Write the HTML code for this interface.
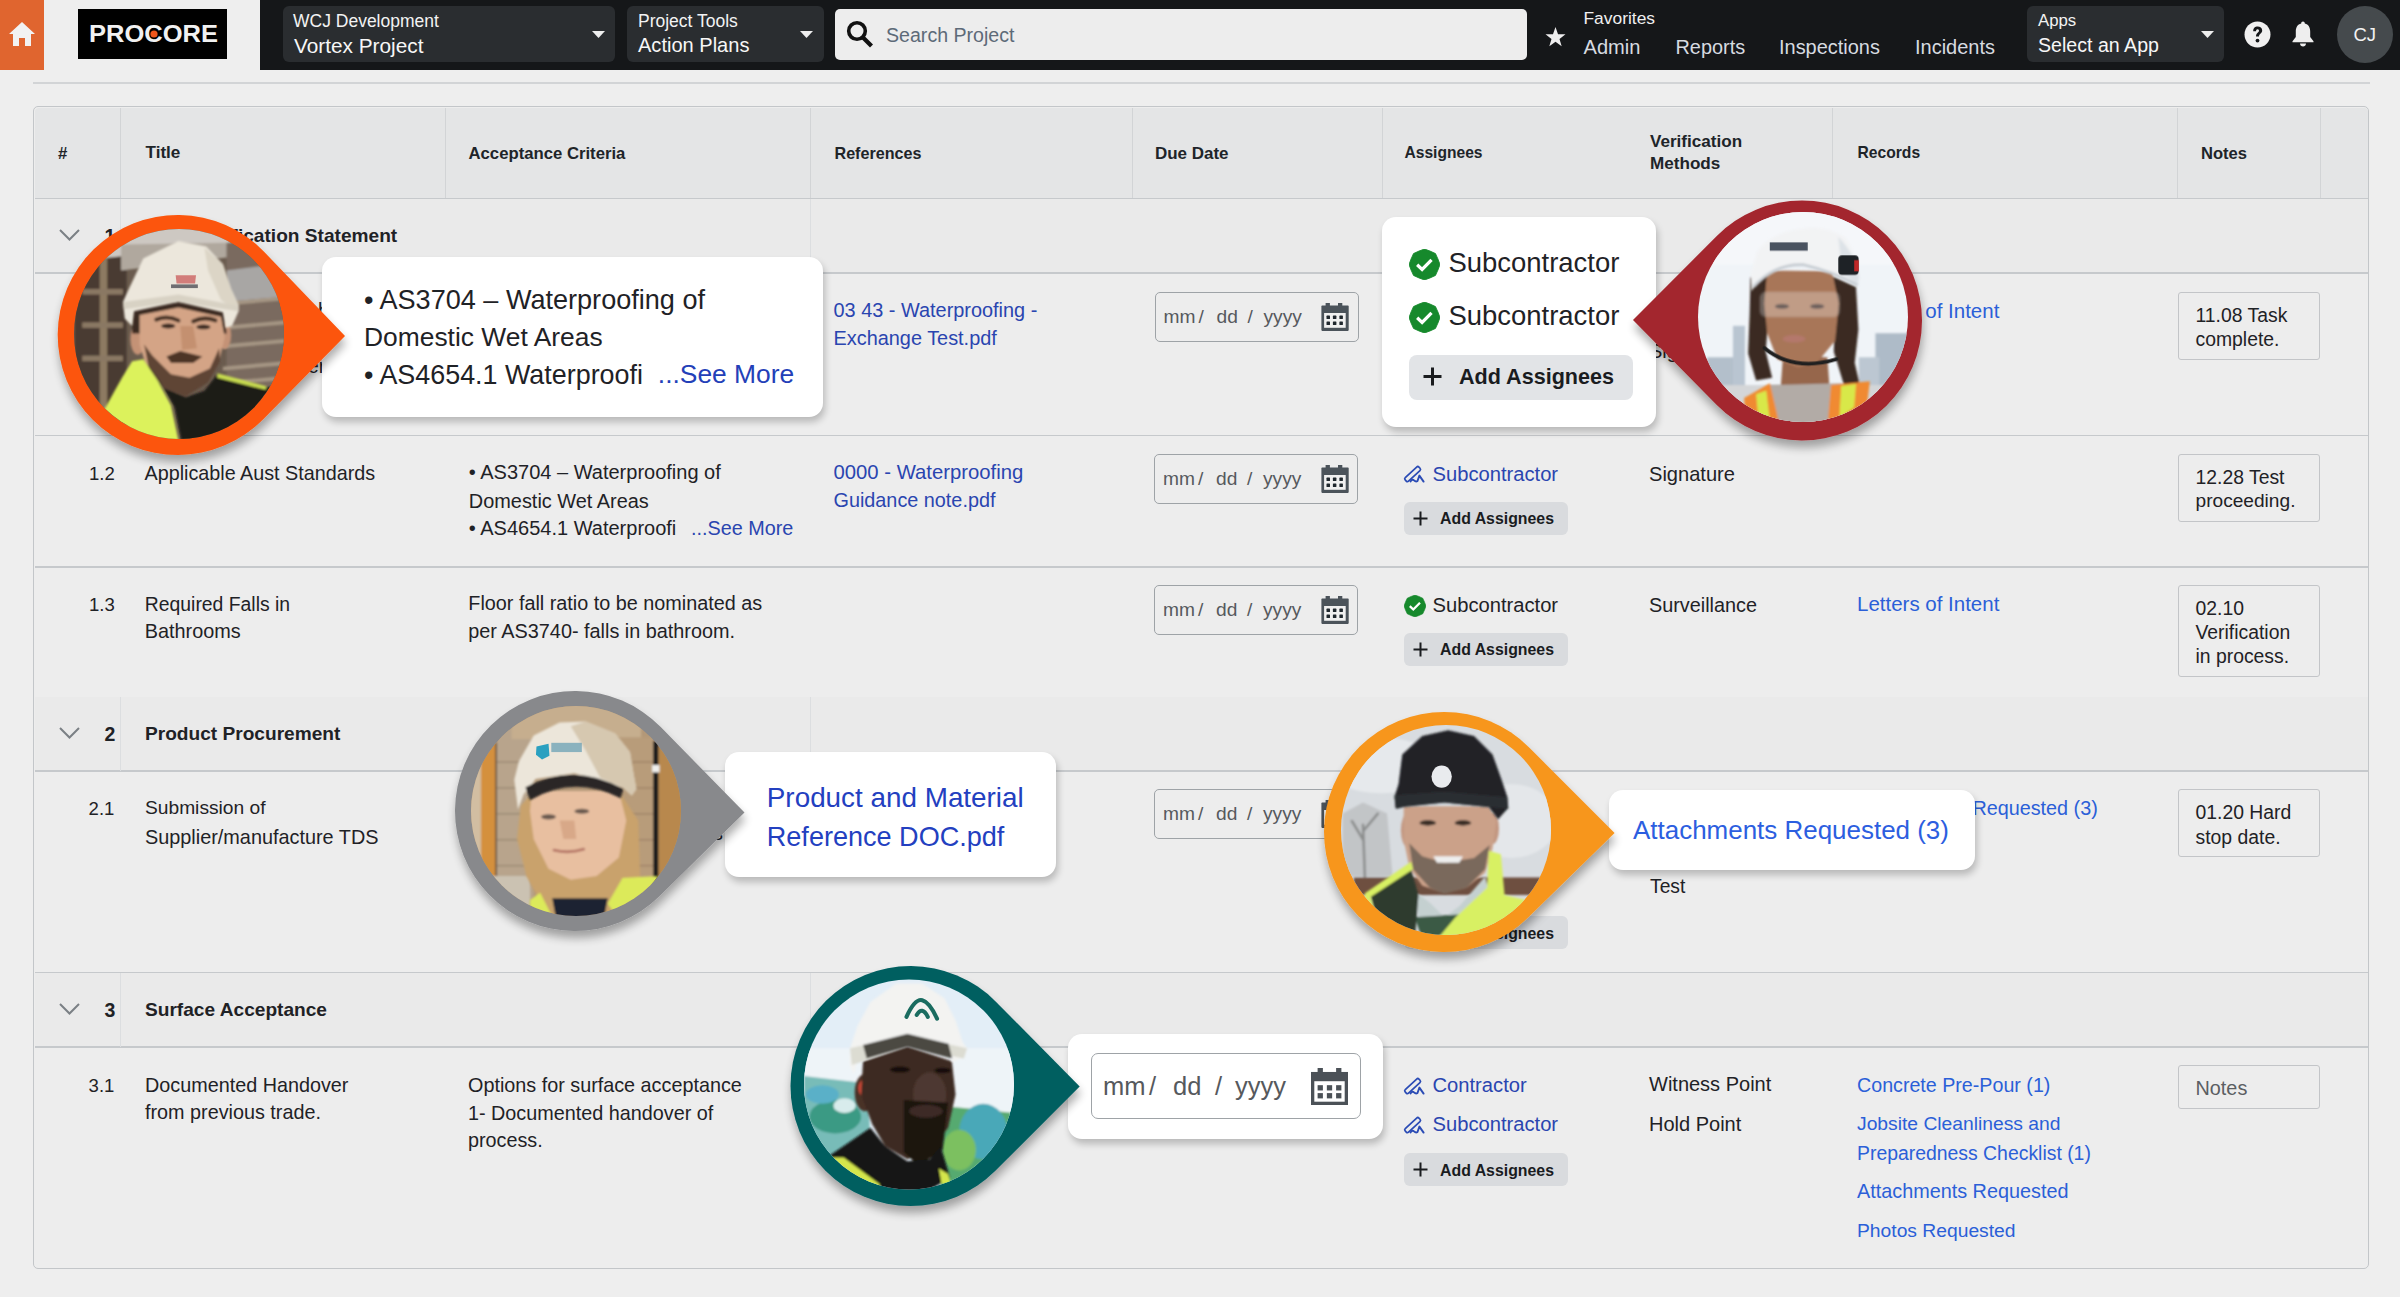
<!DOCTYPE html>
<html><head><meta charset="utf-8"><style>
html,body{margin:0;padding:0;}
body{width:2400px;height:1297px;position:relative;overflow:hidden;background:#eeeeee;font-family:"Liberation Sans",sans-serif;}
.t{position:absolute;white-space:nowrap;}
</style></head><body>
<div style="position:absolute;left:0px;top:0px;width:2400px;height:70px;background:#eeeeee"></div>
<div style="position:absolute;left:0px;top:0px;width:44px;height:70px;background:#e0652f"></div>
<svg style="position:absolute;left:8px;top:21px" width="28" height="26" viewBox="0 0 28 26"><path d="M14 1 L1 13 L5 13 L5 25 L11 25 L11 17 L17 17 L17 25 L23 25 L23 13 L27 13 Z" fill="#f2f2f2"/></svg>
<div style="position:absolute;left:78px;top:9px;width:149px;height:50px;background:#000"></div>
<svg style="position:absolute;left:78px;top:9px" width="149" height="50"><text x="11" y="33" font-family="Liberation Sans" font-weight="700" font-size="23.3" fill="#f1f1f1" textLength="129" lengthAdjust="spacingAndGlyphs">PROCORE</text><circle cx="76" cy="25" r="3.6" fill="#f0561c"/></svg>
<div style="position:absolute;left:260px;top:0px;width:2140px;height:70px;background:#151719"></div>
<div style="position:absolute;left:283px;top:6px;width:332px;height:56px;background:#2a2d30;border-radius:6px"></div>
<div class="t" style="left:293px;top:9.63px;font-size:17.5px;line-height:22px;color:#f3f3f3;">WCJ Development</div>
<div class="t" style="left:294px;top:32.59px;font-size:20.8px;line-height:26px;color:#f7f7f7;">Vortex Project</div>
<svg style="position:absolute;left:592px;top:31px" width="13" height="7"><path d="M0 0 L13 0 L6.5 7Z" fill="#eee"/></svg>
<div style="position:absolute;left:627px;top:6px;width:197px;height:56px;background:#2a2d30;border-radius:6px"></div>
<div class="t" style="left:638px;top:9.63px;font-size:17.5px;line-height:22px;color:#f3f3f3;">Project Tools</div>
<div class="t" style="left:638px;top:33.35px;font-size:20.06px;line-height:25px;color:#f7f7f7;">Action Plans</div>
<svg style="position:absolute;left:800px;top:31px" width="13" height="7"><path d="M0 0 L13 0 L6.5 7Z" fill="#eee"/></svg>
<div style="position:absolute;left:835px;top:9px;width:692px;height:51px;background:#ededed;border-radius:5px"></div>
<svg style="position:absolute;left:846px;top:20px" width="28" height="29" viewBox="0 0 28 29"><circle cx="11" cy="11" r="8.3" stroke="#111" stroke-width="3.6" fill="none"/><path d="M17 17.5 L25.5 26" stroke="#111" stroke-width="4.2" stroke-linecap="butt"/></svg>
<div class="t" style="left:886px;top:23.20px;font-size:19.6px;line-height:24px;color:#5d6a78;">Search Project</div>
<svg style="position:absolute;left:1545px;top:27px" width="21" height="20" viewBox="0 0 24 23"><path d="M12 0 L14.9 8.2 L23.5 8.4 L16.6 13.7 L19.1 22 L12 17 L4.9 22 L7.4 13.7 L0.5 8.4 L9.1 8.2Z" fill="#eee"/></svg>
<div class="t" style="left:1583.5px;top:7.17px;font-size:17.4px;line-height:22px;color:#f0f0f0;">Favorites</div>
<div class="t" style="left:1583.5px;top:35.13px;font-size:20.1px;line-height:25px;color:#d7dbe0;">Admin</div>
<div class="t" style="left:1675.5px;top:35.20px;font-size:19.9px;line-height:25px;color:#d7dbe0;">Reports</div>
<div class="t" style="left:1779px;top:35.18px;font-size:19.97px;line-height:25px;color:#d7dbe0;">Inspections</div>
<div class="t" style="left:1915px;top:35.17px;font-size:20px;line-height:25px;color:#d7dbe0;">Incidents</div>
<div style="position:absolute;left:2027px;top:6px;width:197px;height:56px;background:#2a2d30;border-radius:6px"></div>
<div class="t" style="left:2038px;top:9.98px;font-size:16.8px;line-height:21px;color:#f3f3f3;">Apps</div>
<div class="t" style="left:2038px;top:32.80px;font-size:19.6px;line-height:24px;color:#f7f7f7;">Select an App</div>
<svg style="position:absolute;left:2201px;top:31px" width="13" height="7"><path d="M0 0 L13 0 L6.5 7Z" fill="#eee"/></svg>
<svg style="position:absolute;left:2244px;top:21px" width="27" height="27" viewBox="0 0 27 27"><circle cx="13.5" cy="13.5" r="13" fill="#f0f0f0"/><path d="M9.2 10.2 C9.2 6.8 11.3 5.6 13.6 5.6 C16.2 5.6 18.2 7.2 18.2 9.6 C18.2 12.6 15 12.8 15 15.6 L12 15.6 C12 11.8 15 11.6 15 9.8 C15 8.8 14.4 8.2 13.5 8.2 C12.5 8.2 12 8.9 12 10.2 Z" fill="#151719"/><circle cx="13.5" cy="19.6" r="1.9" fill="#151719"/></svg>
<svg style="position:absolute;left:2291px;top:21px" width="24" height="26" viewBox="0 0 24 26"><path d="M12 0.5 C13.2 0.5 13.8 1.4 13.8 2.6 C17.5 3.5 19.2 6.6 19.2 10.5 L19.2 16 L22.5 20.2 L22.5 21.2 L1.5 21.2 L1.5 20.2 L4.8 16 L4.8 10.5 C4.8 6.6 6.5 3.5 10.2 2.6 C10.2 1.4 10.8 0.5 12 0.5Z" fill="#eee"/><path d="M9 22.5 L15 22.5 C15 24.3 13.6 25.5 12 25.5 C10.4 25.5 9 24.3 9 22.5Z" fill="#eee"/></svg>
<div style="position:absolute;left:2337px;top:6px;width:56px;height:57px;background:#454a4d;border-radius:50%"></div>
<div class="t" style="left:2353.5px;top:23.09px;font-size:18.5px;line-height:23px;color:#f2f2f2;">CJ</div>
<div style="position:absolute;left:33px;top:82px;width:2337px;height:2px;background:#d2d4d6"></div>
<div style="position:absolute;left:33px;top:106px;width:2336px;height:1163px;background:#ededed;border:1.5px solid #c3c6c9;border-radius:5px;box-sizing:border-box"></div>
<div style="position:absolute;left:35px;top:107.5px;width:2333px;height:91px;background:#e4e5e6;border-radius:4px 4px 0 0"></div>
<div style="position:absolute;left:120px;top:108px;width:1.2px;height:90px;background:#d2d4d6"></div>
<div style="position:absolute;left:445px;top:108px;width:1.2px;height:90px;background:#d2d4d6"></div>
<div style="position:absolute;left:810px;top:108px;width:1.2px;height:90px;background:#d2d4d6"></div>
<div style="position:absolute;left:1132px;top:108px;width:1.2px;height:90px;background:#d2d4d6"></div>
<div style="position:absolute;left:1382px;top:108px;width:1.2px;height:90px;background:#d2d4d6"></div>
<div style="position:absolute;left:1832px;top:108px;width:1.2px;height:90px;background:#d2d4d6"></div>
<div style="position:absolute;left:2177px;top:108px;width:1.2px;height:90px;background:#d2d4d6"></div>
<div style="position:absolute;left:2320px;top:108px;width:1.2px;height:90px;background:#d2d4d6"></div>
<div style="position:absolute;left:35px;top:197.5px;width:2333px;height:1.5px;background:#c6c9cc"></div>
<div class="t" style="left:58px;top:142.58px;font-size:16.8px;line-height:21px;color:#202429;font-weight:700;">#</div>
<div class="t" style="left:145.5px;top:142.47px;font-size:17.1px;line-height:21px;color:#202429;font-weight:700;">Title</div>
<div class="t" style="left:468.5px;top:142.60px;font-size:16.72px;line-height:21px;color:#202429;font-weight:700;">Acceptance Criteria</div>
<div class="t" style="left:834.5px;top:143.30px;font-size:16.14px;line-height:20px;color:#202429;font-weight:700;">References</div>
<div class="t" style="left:1155px;top:142.51px;font-size:16.98px;line-height:21px;color:#202429;font-weight:700;">Due Date</div>
<div class="t" style="left:1404.5px;top:143.49px;font-size:15.6px;line-height:20px;color:#202429;font-weight:700;">Assignees</div>
<div class="t" style="left:1650px;top:130.87px;font-size:17.1px;line-height:21px;color:#202429;font-weight:700;">Verification</div>
<div class="t" style="left:1650px;top:153.27px;font-size:17.1px;line-height:21px;color:#202429;font-weight:700;">Methods</div>
<div class="t" style="left:1857.5px;top:143.47px;font-size:15.65px;line-height:20px;color:#202429;font-weight:700;">Records</div>
<div class="t" style="left:2201px;top:142.66px;font-size:16.56px;line-height:21px;color:#202429;font-weight:700;">Notes</div>
<div style="position:absolute;left:35px;top:198.5px;width:2333px;height:74.5px;background:#eaeaea"></div>
<div style="position:absolute;left:35px;top:272.25px;width:2333px;height:1.5px;background:#c6c9cc"></div>
<div style="position:absolute;left:120px;top:198.5px;width:1.2px;height:74.5px;background:#dcdee0"></div>
<div style="position:absolute;left:810px;top:198.5px;width:1.2px;height:74.5px;background:#dcdee0"></div>
<svg style="position:absolute;left:59px;top:228.5px" width="21" height="12" viewBox="0 0 21 12"><path d="M1 1 L10.5 10.5 L20 1" stroke="#7b8085" stroke-width="2" fill="none"/></svg>
<div class="t" style="left:104.5px;top:223.74px;font-size:19.5px;line-height:24px;color:#1f2226;font-weight:700;">1</div>
<div class="t" style="left:145px;top:223.87px;font-size:19.12px;line-height:24px;color:#1f2226;font-weight:700;"><span style="position:absolute;left:51.5px">Verification Statement</span></div>
<div style="position:absolute;left:35px;top:434.5px;width:2333px;height:1.5px;background:#c6c9cc"></div>
<div style="position:absolute;left:35px;top:566px;width:2333px;height:1.5px;background:#c6c9cc"></div>
<div style="position:absolute;left:35px;top:697px;width:2333px;height:74px;background:#eaeaea"></div>
<div style="position:absolute;left:35px;top:770.25px;width:2333px;height:1.5px;background:#c6c9cc"></div>
<div style="position:absolute;left:120px;top:697px;width:1.2px;height:74px;background:#dcdee0"></div>
<div style="position:absolute;left:810px;top:697px;width:1.2px;height:74px;background:#dcdee0"></div>
<svg style="position:absolute;left:59px;top:726.8px" width="21" height="12" viewBox="0 0 21 12"><path d="M1 1 L10.5 10.5 L20 1" stroke="#7b8085" stroke-width="2" fill="none"/></svg>
<div class="t" style="left:104.5px;top:722.04px;font-size:19.5px;line-height:24px;color:#1f2226;font-weight:700;">2</div>
<div class="t" style="left:145px;top:722.17px;font-size:19.12px;line-height:24px;color:#1f2226;font-weight:700;">Product Procurement</div>
<div style="position:absolute;left:35px;top:971.5px;width:2333px;height:1.5px;background:#c6c9cc"></div>
<div style="position:absolute;left:35px;top:972.5px;width:2333px;height:74.5px;background:#eaeaea"></div>
<div style="position:absolute;left:35px;top:1046.25px;width:2333px;height:1.5px;background:#c6c9cc"></div>
<div style="position:absolute;left:120px;top:972.5px;width:1.2px;height:74.5px;background:#dcdee0"></div>
<div style="position:absolute;left:810px;top:972.5px;width:1.2px;height:74.5px;background:#dcdee0"></div>
<svg style="position:absolute;left:59px;top:1002.5px" width="21" height="12" viewBox="0 0 21 12"><path d="M1 1 L10.5 10.5 L20 1" stroke="#7b8085" stroke-width="2" fill="none"/></svg>
<div class="t" style="left:104.5px;top:997.74px;font-size:19.5px;line-height:24px;color:#1f2226;font-weight:700;">3</div>
<div class="t" style="left:145px;top:997.87px;font-size:19.12px;line-height:24px;color:#1f2226;font-weight:700;">Surface Acceptance</div>
<div class="t" style="left:89px;top:303.07px;font-size:18.56px;line-height:23px;color:#1f2226;">1.1</div>
<div class="t" style="left:145px;top:297.64px;font-size:19.8px;line-height:25px;color:#1f2226;">Waterproofing Membrane Barrier</div>
<div class="t" style="left:145px;top:325.64px;font-size:19.8px;line-height:25px;color:#1f2226;">Installation Standard</div>
<div class="t" style="left:145px;top:353.64px;font-size:19.8px;line-height:25px;color:#1f2226;">Compliance and Certification</div>
<div class="t" style="left:468px;top:297.64px;font-size:19.8px;line-height:25px;color:#1f2226;">Compliant to</div>
<div class="t" style="left:468px;top:325.64px;font-size:19.8px;line-height:25px;color:#1f2226;">Applicable AS</div>
<div class="t" style="left:468px;top:353.64px;font-size:19.8px;line-height:25px;color:#1f2226;">Standard Listen</div>
<div class="t" style="left:833.5px;top:298.20px;font-size:19.9px;line-height:25px;color:#2a45b0;">03 43 - Waterproofing -</div>
<div class="t" style="left:833.5px;top:326.00px;font-size:19.9px;line-height:25px;color:#2a45b0;">Exchange Test.pdf</div>
<div style="position:absolute;left:1154.5px;top:291.5px;width:204px;height:50px;border:1.5px solid #9ea3a7;border-radius:5px;box-sizing:border-box;background:transparent"></div>
<div class="t" style="left:1163.5px;top:304.84px;font-size:19.2px;line-height:24px;color:#56595d;">mm</div>
<div class="t" style="left:1198.5px;top:304.84px;font-size:19.2px;line-height:24px;color:#56595d;">/</div>
<div class="t" style="left:1216.5px;top:304.84px;font-size:19.2px;line-height:24px;color:#56595d;">dd</div>
<div class="t" style="left:1247.5px;top:304.84px;font-size:19.2px;line-height:24px;color:#56595d;">/</div>
<div class="t" style="left:1263.5px;top:304.84px;font-size:19.2px;line-height:24px;color:#56595d;">yyyy</div>
<svg style="position:absolute;left:1321.0px;top:302.5px" width="28" height="28" viewBox="0 0 28 28"><rect x="0.4" y="2.6" width="27.3" height="25.3" rx="0.8" fill="#4b535a"/><rect x="4.6" y="0" width="4.3" height="4" fill="#4b535a"/><rect x="17" y="0" width="4.3" height="4" fill="#4b535a"/><rect x="3.1" y="10" width="21.6" height="14.8" fill="#f0f0f0"/><g fill="#1f272d"><rect x="5.5" y="12.6" width="3.5" height="3.5" rx="0.6"/><rect x="11.9" y="12.6" width="3.5" height="3.5" rx="0.6"/><rect x="18.4" y="12.6" width="3.5" height="3.5" rx="0.6"/><rect x="5.5" y="18.5" width="3.5" height="3.5" rx="0.6"/><rect x="11.9" y="18.5" width="3.5" height="3.5" rx="0.6"/><rect x="18.4" y="18.5" width="3.5" height="3.5" rx="0.6"/></g></svg>
<div class="t" style="left:1649px;top:338.57px;font-size:20px;line-height:25px;color:#1f2226;">Signature</div>
<div class="t" style="left:1857px;top:297.50px;font-size:20.49px;line-height:26px;color:#2b5fd8;">Letters of Intent</div>
<div style="position:absolute;left:2177.5px;top:291.5px;width:142.5px;height:68px;border:1.2px solid #c3c5c8;border-radius:3px;box-sizing:border-box"></div>
<div class="t" style="left:2195.5px;top:302.88px;font-size:19.37px;line-height:24px;color:#1f2226;">11.08 Task</div>
<div class="t" style="left:2195.5px;top:326.88px;font-size:19.37px;line-height:24px;color:#1f2226;">complete.</div>
<div class="t" style="left:89px;top:461.97px;font-size:18.56px;line-height:23px;color:#1f2226;">1.2</div>
<div class="t" style="left:144.5px;top:460.55px;font-size:19.76px;line-height:25px;color:#1f2226;">Applicable Aust Standards</div>
<div class="t" style="left:468.8px;top:460.47px;font-size:20.0px;line-height:25px;color:#1f2226;">• AS3704 – Waterproofing of</div>
<div class="t" style="left:468.8px;top:488.50px;font-size:19.91px;line-height:25px;color:#1f2226;">Domestic Wet Areas</div>
<div class="t" style="left:468.8px;top:516.37px;font-size:20.0px;line-height:25px;color:#1f2226;">• AS4654.1 Waterproofi</div>
<div class="t" style="left:691px;top:516.44px;font-size:19.8px;line-height:25px;color:#2a45b0;">...See More</div>
<div class="t" style="left:833.5px;top:460.46px;font-size:20.3px;line-height:25px;color:#2a45b0;">0000 - Waterproofing</div>
<div class="t" style="left:833.5px;top:488.33px;font-size:19.82px;line-height:25px;color:#2a45b0;">Guidance note.pdf</div>
<div style="position:absolute;left:1154px;top:453.5px;width:204px;height:50px;border:1.5px solid #9ea3a7;border-radius:5px;box-sizing:border-box;background:transparent"></div>
<div class="t" style="left:1163px;top:466.84px;font-size:19.2px;line-height:24px;color:#56595d;">mm</div>
<div class="t" style="left:1198px;top:466.84px;font-size:19.2px;line-height:24px;color:#56595d;">/</div>
<div class="t" style="left:1216px;top:466.84px;font-size:19.2px;line-height:24px;color:#56595d;">dd</div>
<div class="t" style="left:1247px;top:466.84px;font-size:19.2px;line-height:24px;color:#56595d;">/</div>
<div class="t" style="left:1263px;top:466.84px;font-size:19.2px;line-height:24px;color:#56595d;">yyyy</div>
<svg style="position:absolute;left:1320.5px;top:464.5px" width="28" height="28" viewBox="0 0 28 28"><rect x="0.4" y="2.6" width="27.3" height="25.3" rx="0.8" fill="#4b535a"/><rect x="4.6" y="0" width="4.3" height="4" fill="#4b535a"/><rect x="17" y="0" width="4.3" height="4" fill="#4b535a"/><rect x="3.1" y="10" width="21.6" height="14.8" fill="#f0f0f0"/><g fill="#1f272d"><rect x="5.5" y="12.6" width="3.5" height="3.5" rx="0.6"/><rect x="11.9" y="12.6" width="3.5" height="3.5" rx="0.6"/><rect x="18.4" y="12.6" width="3.5" height="3.5" rx="0.6"/><rect x="5.5" y="18.5" width="3.5" height="3.5" rx="0.6"/><rect x="11.9" y="18.5" width="3.5" height="3.5" rx="0.6"/><rect x="18.4" y="18.5" width="3.5" height="3.5" rx="0.6"/></g></svg>
<svg style="position:absolute;left:1400px;top:460px" width="30" height="28" viewBox="0 0 30 28"><rect x="-9.4" y="-2.4" width="18.8" height="4.8" rx="1.6" transform="translate(12.6 14.1) rotate(-43)" stroke="#2a4bb5" stroke-width="1.7" fill="none"/><path d="M10.6 21.4 Q12.2 18.6 14 20.4 Q15.6 22 17.4 21.2 L19.4 15.6 L23.6 21.6" stroke="#2a4bb5" stroke-width="1.9" fill="none" stroke-linejoin="round" stroke-linecap="round"/></svg>
<div class="t" style="left:1432.5px;top:461.50px;font-size:20.18px;line-height:25px;color:#2a45b0;">Subcontractor</div>
<div style="position:absolute;left:1404px;top:501.5px;width:164px;height:33px;background:#d9dbde;border-radius:6px"></div>
<svg style="position:absolute;left:1413px;top:510.5px" width="15" height="15"><path d="M7.5 0.5 V14.5 M0.5 7.5 H14.5" stroke="#1a1c1f" stroke-width="2"/></svg>
<div class="t" style="left:1440px;top:509.00px;font-size:15.86px;line-height:20px;color:#1a1c1f;font-weight:700;">Add Assignees</div>
<div class="t" style="left:1649px;top:461.53px;font-size:20.09px;line-height:25px;color:#1f2226;">Signature</div>
<div style="position:absolute;left:2177.5px;top:453.5px;width:142.5px;height:68px;border:1.2px solid #c3c5c8;border-radius:3px;box-sizing:border-box"></div>
<div class="t" style="left:2195.5px;top:465.18px;font-size:19.37px;line-height:24px;color:#1f2226;">12.28 Test</div>
<div class="t" style="left:2195.5px;top:488.86px;font-size:19.14px;line-height:24px;color:#1f2226;">proceeding.</div>
<div class="t" style="left:89px;top:592.57px;font-size:18.56px;line-height:23px;color:#1f2226;">1.3</div>
<div class="t" style="left:144.8px;top:591.78px;font-size:19.38px;line-height:24px;color:#1f2226;">Required Falls in</div>
<div class="t" style="left:144.8px;top:619.12px;font-size:19.85px;line-height:25px;color:#1f2226;">Bathrooms</div>
<div class="t" style="left:468.3px;top:591.13px;font-size:19.81px;line-height:25px;color:#1f2226;">Floor fall ratio to be nominated as</div>
<div class="t" style="left:468.3px;top:619.12px;font-size:19.83px;line-height:25px;color:#1f2226;">per AS3740- falls in bathroom.</div>
<div style="position:absolute;left:1154px;top:584.5px;width:204px;height:50px;border:1.5px solid #9ea3a7;border-radius:5px;box-sizing:border-box;background:transparent"></div>
<div class="t" style="left:1163px;top:597.84px;font-size:19.2px;line-height:24px;color:#56595d;">mm</div>
<div class="t" style="left:1198px;top:597.84px;font-size:19.2px;line-height:24px;color:#56595d;">/</div>
<div class="t" style="left:1216px;top:597.84px;font-size:19.2px;line-height:24px;color:#56595d;">dd</div>
<div class="t" style="left:1247px;top:597.84px;font-size:19.2px;line-height:24px;color:#56595d;">/</div>
<div class="t" style="left:1263px;top:597.84px;font-size:19.2px;line-height:24px;color:#56595d;">yyyy</div>
<svg style="position:absolute;left:1320.5px;top:595.5px" width="28" height="28" viewBox="0 0 28 28"><rect x="0.4" y="2.6" width="27.3" height="25.3" rx="0.8" fill="#4b535a"/><rect x="4.6" y="0" width="4.3" height="4" fill="#4b535a"/><rect x="17" y="0" width="4.3" height="4" fill="#4b535a"/><rect x="3.1" y="10" width="21.6" height="14.8" fill="#f0f0f0"/><g fill="#1f272d"><rect x="5.5" y="12.6" width="3.5" height="3.5" rx="0.6"/><rect x="11.9" y="12.6" width="3.5" height="3.5" rx="0.6"/><rect x="18.4" y="12.6" width="3.5" height="3.5" rx="0.6"/><rect x="5.5" y="18.5" width="3.5" height="3.5" rx="0.6"/><rect x="11.9" y="18.5" width="3.5" height="3.5" rx="0.6"/><rect x="18.4" y="18.5" width="3.5" height="3.5" rx="0.6"/></g></svg>
<svg style="position:absolute;left:1404px;top:594.6px" width="22" height="22" viewBox="0 0 22 22"><polygon points="11.00,0.00 14.94,1.48 18.78,3.22 20.52,7.06 22.00,11.00 20.52,14.94 18.78,18.78 14.94,20.52 11.00,22.00 7.06,20.52 3.22,18.78 1.48,14.94 0.00,11.00 1.48,7.06 3.22,3.22 7.06,1.48" fill="#16892c" stroke="#16892c" stroke-width="0.6" stroke-linejoin="round"/><path d="M5.8 11.2 L9.3 14.5 L16 7.7" stroke="#fff" stroke-width="2.3" fill="none"/></svg>
<div class="t" style="left:1432.5px;top:592.50px;font-size:20.18px;line-height:25px;color:#1f2226;">Subcontractor</div>
<div style="position:absolute;left:1404px;top:632.5px;width:164px;height:33px;background:#d9dbde;border-radius:6px"></div>
<svg style="position:absolute;left:1413px;top:641.5px" width="15" height="15"><path d="M7.5 0.5 V14.5 M0.5 7.5 H14.5" stroke="#1a1c1f" stroke-width="2"/></svg>
<div class="t" style="left:1440px;top:640.00px;font-size:15.86px;line-height:20px;color:#1a1c1f;font-weight:700;">Add Assignees</div>
<div class="t" style="left:1649px;top:592.62px;font-size:19.83px;line-height:25px;color:#1f2226;">Surveillance</div>
<div class="t" style="left:1857px;top:590.90px;font-size:20.49px;line-height:26px;color:#2b5fd8;">Letters of Intent</div>
<div style="position:absolute;left:2177.5px;top:585px;width:142.5px;height:91.5px;border:1.2px solid #c3c5c8;border-radius:3px;box-sizing:border-box"></div>
<div class="t" style="left:2195.5px;top:596.28px;font-size:19.37px;line-height:24px;color:#1f2226;">02.10</div>
<div class="t" style="left:2195.5px;top:620.28px;font-size:19.37px;line-height:24px;color:#1f2226;">Verification</div>
<div class="t" style="left:2195.5px;top:644.08px;font-size:19.37px;line-height:24px;color:#1f2226;">in process.</div>
<div class="t" style="left:88.6px;top:797.07px;font-size:18.56px;line-height:23px;color:#1f2226;">2.1</div>
<div class="t" style="left:145px;top:796.35px;font-size:19.19px;line-height:24px;color:#1f2226;">Submission of</div>
<div class="t" style="left:145px;top:824.62px;font-size:19.85px;line-height:25px;color:#1f2226;">Supplier/manufacture TDS</div>
<div class="t" style="left:468px;top:795.64px;font-size:19.8px;line-height:25px;color:#1f2226;">Submit product data sheets</div>
<div class="t" style="right:1677px;top:820.5px;font-size:19.8px;line-height:25px;color:#1f2226">product datasheets</div>
<div style="position:absolute;left:1154px;top:789px;width:204px;height:50px;border:1.5px solid #9ea3a7;border-radius:5px;box-sizing:border-box;background:transparent"></div>
<div class="t" style="left:1163px;top:802.34px;font-size:19.2px;line-height:24px;color:#56595d;">mm</div>
<div class="t" style="left:1198px;top:802.34px;font-size:19.2px;line-height:24px;color:#56595d;">/</div>
<div class="t" style="left:1216px;top:802.34px;font-size:19.2px;line-height:24px;color:#56595d;">dd</div>
<div class="t" style="left:1247px;top:802.34px;font-size:19.2px;line-height:24px;color:#56595d;">/</div>
<div class="t" style="left:1263px;top:802.34px;font-size:19.2px;line-height:24px;color:#56595d;">yyyy</div>
<svg style="position:absolute;left:1320.5px;top:800px" width="28" height="28" viewBox="0 0 28 28"><rect x="0.4" y="2.6" width="27.3" height="25.3" rx="0.8" fill="#4b535a"/><rect x="4.6" y="0" width="4.3" height="4" fill="#4b535a"/><rect x="17" y="0" width="4.3" height="4" fill="#4b535a"/><rect x="3.1" y="10" width="21.6" height="14.8" fill="#f0f0f0"/><g fill="#1f272d"><rect x="5.5" y="12.6" width="3.5" height="3.5" rx="0.6"/><rect x="11.9" y="12.6" width="3.5" height="3.5" rx="0.6"/><rect x="18.4" y="12.6" width="3.5" height="3.5" rx="0.6"/><rect x="5.5" y="18.5" width="3.5" height="3.5" rx="0.6"/><rect x="11.9" y="18.5" width="3.5" height="3.5" rx="0.6"/><rect x="18.4" y="18.5" width="3.5" height="3.5" rx="0.6"/></g></svg>
<svg style="position:absolute;left:1404px;top:804.0px" width="22" height="22" viewBox="0 0 22 22"><polygon points="11.00,0.00 14.94,1.48 18.78,3.22 20.52,7.06 22.00,11.00 20.52,14.94 18.78,18.78 14.94,20.52 11.00,22.00 7.06,20.52 3.22,18.78 1.48,14.94 0.00,11.00 1.48,7.06 3.22,3.22 7.06,1.48" fill="#16892c" stroke="#16892c" stroke-width="0.6" stroke-linejoin="round"/><path d="M5.8 11.2 L9.3 14.5 L16 7.7" stroke="#fff" stroke-width="2.3" fill="none"/></svg>
<div class="t" style="left:1432.5px;top:801.50px;font-size:20.18px;line-height:25px;color:#1f2226;">Subcontractor</div>
<div style="position:absolute;left:1404px;top:916px;width:164px;height:33px;background:#d9dbde;border-radius:6px"></div>
<svg style="position:absolute;left:1413px;top:925px" width="15" height="15"><path d="M7.5 0.5 V14.5 M0.5 7.5 H14.5" stroke="#1a1c1f" stroke-width="2"/></svg>
<div class="t" style="left:1440px;top:923.50px;font-size:15.86px;line-height:20px;color:#1a1c1f;font-weight:700;">Add Assignees</div>
<div class="t" style="left:1649px;top:795.57px;font-size:20px;line-height:25px;color:#1f2226;">Attachments</div>
<div class="t" style="left:1650px;top:875.31px;font-size:19.3px;line-height:24px;color:#1f2226;">Test</div>
<div class="t" style="left:1857px;top:795.64px;font-size:19.8px;line-height:25px;color:#2b5fd8;">Attachments Requested (3)</div>
<div style="position:absolute;left:2178px;top:789.3px;width:141.6px;height:67.4px;border:1.2px solid #c3c5c8;border-radius:3px;box-sizing:border-box"></div>
<div class="t" style="left:2195.5px;top:800.28px;font-size:19.37px;line-height:24px;color:#1f2226;">01.20 Hard</div>
<div class="t" style="left:2195.5px;top:824.78px;font-size:19.37px;line-height:24px;color:#1f2226;">stop date.</div>
<div class="t" style="left:88.6px;top:1074.07px;font-size:18.56px;line-height:23px;color:#1f2226;">3.1</div>
<div class="t" style="left:145px;top:1072.64px;font-size:19.8px;line-height:25px;color:#1f2226;">Documented Handover</div>
<div class="t" style="left:145px;top:1099.84px;font-size:19.8px;line-height:25px;color:#1f2226;">from previous trade.</div>
<div class="t" style="left:468px;top:1072.64px;font-size:19.8px;line-height:25px;color:#1f2226;">Options for surface acceptance</div>
<div class="t" style="left:468px;top:1100.64px;font-size:19.8px;line-height:25px;color:#1f2226;">1- Documented handover of</div>
<div class="t" style="left:468px;top:1128.04px;font-size:19.8px;line-height:25px;color:#1f2226;">process.</div>
<div style="position:absolute;left:1154px;top:1062px;width:204px;height:50px;border:1.5px solid #9ea3a7;border-radius:5px;box-sizing:border-box;background:transparent"></div>
<div class="t" style="left:1163px;top:1075.34px;font-size:19.2px;line-height:24px;color:#56595d;">mm</div>
<div class="t" style="left:1198px;top:1075.34px;font-size:19.2px;line-height:24px;color:#56595d;">/</div>
<div class="t" style="left:1216px;top:1075.34px;font-size:19.2px;line-height:24px;color:#56595d;">dd</div>
<div class="t" style="left:1247px;top:1075.34px;font-size:19.2px;line-height:24px;color:#56595d;">/</div>
<div class="t" style="left:1263px;top:1075.34px;font-size:19.2px;line-height:24px;color:#56595d;">yyyy</div>
<svg style="position:absolute;left:1320.5px;top:1073px" width="28" height="28" viewBox="0 0 28 28"><rect x="0.4" y="2.6" width="27.3" height="25.3" rx="0.8" fill="#4b535a"/><rect x="4.6" y="0" width="4.3" height="4" fill="#4b535a"/><rect x="17" y="0" width="4.3" height="4" fill="#4b535a"/><rect x="3.1" y="10" width="21.6" height="14.8" fill="#f0f0f0"/><g fill="#1f272d"><rect x="5.5" y="12.6" width="3.5" height="3.5" rx="0.6"/><rect x="11.9" y="12.6" width="3.5" height="3.5" rx="0.6"/><rect x="18.4" y="12.6" width="3.5" height="3.5" rx="0.6"/><rect x="5.5" y="18.5" width="3.5" height="3.5" rx="0.6"/><rect x="11.9" y="18.5" width="3.5" height="3.5" rx="0.6"/><rect x="18.4" y="18.5" width="3.5" height="3.5" rx="0.6"/></g></svg>
<svg style="position:absolute;left:1400px;top:1072px" width="30" height="28" viewBox="0 0 30 28"><rect x="-9.4" y="-2.4" width="18.8" height="4.8" rx="1.6" transform="translate(12.6 14.1) rotate(-43)" stroke="#2a4bb5" stroke-width="1.7" fill="none"/><path d="M10.6 21.4 Q12.2 18.6 14 20.4 Q15.6 22 17.4 21.2 L19.4 15.6 L23.6 21.6" stroke="#2a4bb5" stroke-width="1.9" fill="none" stroke-linejoin="round" stroke-linecap="round"/></svg>
<div class="t" style="left:1432.5px;top:1072.90px;font-size:20.18px;line-height:25px;color:#2a45b0;">Contractor</div>
<svg style="position:absolute;left:1400px;top:1111px" width="30" height="28" viewBox="0 0 30 28"><rect x="-9.4" y="-2.4" width="18.8" height="4.8" rx="1.6" transform="translate(12.6 14.1) rotate(-43)" stroke="#2a4bb5" stroke-width="1.7" fill="none"/><path d="M10.6 21.4 Q12.2 18.6 14 20.4 Q15.6 22 17.4 21.2 L19.4 15.6 L23.6 21.6" stroke="#2a4bb5" stroke-width="1.9" fill="none" stroke-linejoin="round" stroke-linecap="round"/></svg>
<div class="t" style="left:1432.5px;top:1112.10px;font-size:20.18px;line-height:25px;color:#2a45b0;">Subcontractor</div>
<div style="position:absolute;left:1404px;top:1153px;width:164px;height:33px;background:#d9dbde;border-radius:6px"></div>
<svg style="position:absolute;left:1413px;top:1162px" width="15" height="15"><path d="M7.5 0.5 V14.5 M0.5 7.5 H14.5" stroke="#1a1c1f" stroke-width="2"/></svg>
<div class="t" style="left:1440px;top:1160.50px;font-size:15.86px;line-height:20px;color:#1a1c1f;font-weight:700;">Add Assignees</div>
<div class="t" style="left:1649px;top:1072.17px;font-size:20px;line-height:25px;color:#1f2226;">Witness Point</div>
<div class="t" style="left:1649px;top:1111.57px;font-size:20px;line-height:25px;color:#1f2226;">Hold Point</div>
<div class="t" style="left:1857px;top:1072.88px;font-size:19.67px;line-height:25px;color:#2b5fd8;">Concrete Pre-Pour (1)</div>
<div class="t" style="left:1857px;top:1112.32px;font-size:19.28px;line-height:24px;color:#2b5fd8;">Jobsite Cleanliness and</div>
<div class="t" style="left:1857px;top:1140.57px;font-size:19.4px;line-height:24px;color:#2b5fd8;">Preparedness Checklist (1)</div>
<div class="t" style="left:1857px;top:1179.23px;font-size:19.82px;line-height:25px;color:#2b5fd8;">Attachments Requested</div>
<div class="t" style="left:1857px;top:1219.32px;font-size:19.28px;line-height:24px;color:#2b5fd8;">Photos Requested</div>
<div style="position:absolute;left:2177.5px;top:1065.4px;width:142.5px;height:44px;border:1.2px solid #c3c5c8;border-radius:3px;box-sizing:border-box"></div>
<div class="t" style="left:2195.5px;top:1075.62px;font-size:19.83px;line-height:25px;color:#5b5e62;">Notes</div>
<div style="position:absolute;left:322px;top:257px;width:501px;height:160px;background:#fff;border-radius:14px;box-shadow:2px 5px 7px rgba(0,0,0,0.22)"></div><div class="t" style="left:364px;top:283.41px;font-size:27.07px;line-height:34px;color:#1f2226;">• AS3704 – Waterproofing of</div><div class="t" style="left:364px;top:321.25px;font-size:26.4px;line-height:33px;color:#1f2226;">Domestic Wet Areas</div><div class="t" style="left:364px;top:357.67px;font-size:26.9px;line-height:34px;color:#1f2226;">• AS4654.1 Waterproofi</div><div class="t" style="left:657.8px;top:358.35px;font-size:26.4px;line-height:33px;color:#2340b8;">...See More</div>
<svg style="position:absolute;left:47px;top:200px;overflow:visible" width="313" height="280" viewBox="0 0 313 280">
<defs><clipPath id="cp1"><circle cx="132" cy="134" r="105"/></clipPath>
<filter id="sh1" x="-20%" y="-20%" width="140%" height="150%"><feGaussianBlur in="SourceAlpha" stdDeviation="5"/><feOffset dx="1" dy="7"/><feComponentTransfer><feFuncA type="linear" slope="0.33"/></feComponentTransfer><feMerge><feMergeNode/><feMergeNode in="SourceGraphic"/></feMerge></filter>
<filter id="bl1" x="-5%" y="-5%" width="110%" height="110%"><feGaussianBlur stdDeviation="7"/></filter></defs>
<path d="M217.27 51.90 L298 136 L216.27 219.13 A120 120 0 1 1 217.27 51.90 Z" fill="#fc5409" filter="url(#sh1)"/>
<g clip-path="url(#cp1)"><g transform="translate(13,15) scale(0.185042)"><rect x="0" y="0" width="1297" height="1297" fill="#6a5b4e" /><g filter="url(#bl1)"><path d="M150 60 L1150 60 L1150 170 L950 150 L650 170 L300 300 L150 320 Z" fill="#cdc8c2" /><path d="M80 250 L360 220 L360 1150 L80 1150 Z" fill="#4a3b31" /><rect x="215" y="230" width="40" height="920" fill="#8d7a62" /><rect x="120" y="400" width="220" height="30" fill="#8a7864" /><rect x="120" y="580" width="220" height="30" fill="#8a7864" /><rect x="120" y="760" width="220" height="30" fill="#8a7864" /><path d="M900 150 L1220 120 L1220 1000 L900 1000 Z" fill="#7a6b5f" /><path d="M900 300 L1220 260 L1220 440 L900 470 Z" fill="#a8a6a4" /><path d="M880 470 L1220 440 L1220 460 L880 490 Z" fill="#a69684" /><path d="M880 600 L1220 570 L1220 590 L880 620 Z" fill="#a69684" /><path d="M880 700 L1220 670 L1220 690 L880 720 Z" fill="#a69684" /><path d="M880 820 L1220 790 L1220 810 L880 840 Z" fill="#a69684" /><path d="M880 900 L1220 870 L1220 890 L880 920 Z" fill="#a69684" /><path d="M330 160 L900 150 L900 230 L330 300 Z" fill="#b0a89e" /></g><g filter="url(#bl1)"><ellipse cx="420" cy="670" rx="40" ry="85" fill="#c49276" /><ellipse cx="890" cy="650" rx="35" ry="75" fill="#c49276" /><path d="M390 500 L640 460 L890 520 L900 640 L390 640 Z" fill="#3a2b22" /><path d="M430 540 L640 500 L870 550 L890 660 L860 790 L800 900 L680 970 L560 930 L470 830 L430 700 Z" fill="#d4a486" /><path d="M650 600 L720 600 L740 720 L660 730 Z" fill="#c4906f" /><path d="M520 565 Q580 540 640 570" stroke="#4a3428" stroke-width="22" fill="none" stroke-linecap="round" /><path d="M720 575 Q780 545 840 570" stroke="#4a3428" stroke-width="22" fill="none" stroke-linecap="round" /><ellipse cx="585" cy="600" rx="38" ry="13" fill="#3a2a22" /><ellipse cx="775" cy="605" rx="38" ry="13" fill="#3a2a22" /><path d="M455 700 L480 830 L560 935 L680 980 L800 905 L865 790 L860 720 L810 830 L700 880 L600 860 L500 760 Z" fill="#5e4434" /><path d="M575 765 L650 735 L770 765 L720 800 L600 800 Z" fill="#4e3628" /><path d="M450 780 L540 900 L620 1040 L660 1240 L1200 1240 L1160 930 L1110 930 L850 860 L780 950 L680 985 L560 935 Z" fill="#1d1a19" /><path d="M240 1050 L335 880 L390 790 L450 780 L530 900 L600 1030 L645 1240 L240 1240 Z" fill="#dcf25c" /><path d="M850 855 L1115 925 L1112 945 L850 880 Z" fill="#c8dc50" /></g><g filter="url(#bl1)"><path d="M340 470 L372 400 L450 235 L640 140 L790 170 L880 265 L925 400 L965 485 L965 520 L930 600 L895 610 L880 525 L640 470 L400 520 L390 600 L350 560 Z" fill="#ece7dc" /><path d="M780 175 L880 265 L925 400 L965 485 L930 500 L870 460 L800 300 Z" fill="#dcd5c6" /><path d="M340 470 L640 430 L965 490 L965 520 L640 470 L345 510 Z" fill="#d8d2c4" /></g><path d="M625 325 L735 325 L730 370 L630 370 Z" fill="#c85050" opacity="0.7"/><rect x="600" y="375" width="145" height="20" fill="#3a3a44" opacity="0.7"/></g></g>
</svg>
<div style="position:absolute;left:1382px;top:217px;width:274px;height:210px;background:#fff;border-radius:14px;box-shadow:2px 5px 7px rgba(0,0,0,0.22)"></div>
<svg style="position:absolute;left:1409px;top:248.5px" width="31" height="31" viewBox="0 0 22 22"><polygon points="11.00,0.00 14.94,1.48 18.78,3.22 20.52,7.06 22.00,11.00 20.52,14.94 18.78,18.78 14.94,20.52 11.00,22.00 7.06,20.52 3.22,18.78 1.48,14.94 0.00,11.00 1.48,7.06 3.22,3.22 7.06,1.48" fill="#16892c" stroke="#16892c" stroke-width="0.6" stroke-linejoin="round"/><path d="M5.8 11.2 L9.3 14.5 L16 7.7" stroke="#fff" stroke-width="2.3" fill="none"/></svg>
<div class="t" style="left:1448.4px;top:245.88px;font-size:27.47px;line-height:34px;color:#1f2226;">Subcontractor</div>
<svg style="position:absolute;left:1409px;top:302.1px" width="31" height="31" viewBox="0 0 22 22"><polygon points="11.00,0.00 14.94,1.48 18.78,3.22 20.52,7.06 22.00,11.00 20.52,14.94 18.78,18.78 14.94,20.52 11.00,22.00 7.06,20.52 3.22,18.78 1.48,14.94 0.00,11.00 1.48,7.06 3.22,3.22 7.06,1.48" fill="#16892c" stroke="#16892c" stroke-width="0.6" stroke-linejoin="round"/><path d="M5.8 11.2 L9.3 14.5 L16 7.7" stroke="#fff" stroke-width="2.3" fill="none"/></svg>
<div class="t" style="left:1448.4px;top:299.38px;font-size:27.47px;line-height:34px;color:#1f2226;">Subcontractor</div>
<div style="position:absolute;left:1409px;top:354.5px;width:224px;height:45px;background:#e2e4e7;border-radius:8px"></div>
<svg style="position:absolute;left:1423px;top:367px" width="19" height="19"><path d="M9.5 0.5 V18.5 M0.5 9.5 H18.5" stroke="#1a1c1f" stroke-width="3"/></svg>
<div class="t" style="left:1459px;top:363.02px;font-size:21.57px;line-height:27px;color:#1a1c1f;font-weight:700;">Add Assignees</div>
<svg style="position:absolute;left:1623px;top:185px;overflow:visible" width="314" height="280" viewBox="0 0 314 280">
<defs><clipPath id="cp2"><circle cx="180" cy="132" r="105"/></clipPath>
<filter id="sh2" x="-20%" y="-20%" width="140%" height="150%"><feGaussianBlur in="SourceAlpha" stdDeviation="5"/><feOffset dx="1" dy="7"/><feComponentTransfer><feFuncA type="linear" slope="0.33"/></feComponentTransfer><feMerge><feMergeNode/><feMergeNode in="SourceGraphic"/></feMerge></filter>
<filter id="bl2" x="-5%" y="-5%" width="110%" height="110%"><feGaussianBlur stdDeviation="7"/></filter></defs>
<path d="M93.54 219.74 L10 135 L94.04 50.75 A120 120 0 1 1 93.54 219.74 Z" fill="#a3262d" filter="url(#sh2)"/>
<g clip-path="url(#cp2)"><g transform="translate(60,15) scale(0.185042)"><rect x="0" y="0" width="1297" height="1297" fill="#f0f4f8" /><g filter="url(#bl2)"><rect x="0" y="0" width="1297" height="350" fill="#f5f7fa" /><rect x="270" y="680" width="65" height="380" fill="#b9c5d1" /><rect x="130" y="850" width="140" height="210" fill="#b3bfcb" /><rect x="1040" y="720" width="180" height="340" fill="#aebbc8" /><rect x="950" y="850" width="110" height="210" fill="#bcc7d2" /><rect x="0" y="1000" width="1297" height="297" fill="#d4d6d8" /></g><g filter="url(#bl2)"><path d="M540 850 L780 850 L800 1120 L520 1120 Z" fill="#96664c" /><path d="M365 420 L455 400 L462 620 L447 820 L482 960 L395 975 L352 830 L360 620 Z" fill="#3a2c24" /><path d="M800 410 L935 470 L948 700 L928 880 L958 1010 L870 1000 L815 820 L822 620 Z" fill="#3a2c24" /><path d="M455 380 L805 385 L842 560 L822 760 L732 870 L620 905 L510 860 L455 720 L440 560 Z" fill="#a87659" /><ellipse cx="535" cy="575" rx="38" ry="14" fill="#3a2822" /><ellipse cx="725" cy="575" rx="38" ry="14" fill="#3a2822" /><ellipse cx="600" cy="750" rx="62" ry="20" fill="#b4786c" /><path d="M470 1000 L860 990 L900 1230 L440 1230 Z" fill="#b2aba6" /><path d="M330 1070 L470 990 L525 1230 L340 1230 Z" fill="#f08a30" /><path d="M395 1050 L450 1030 L470 1200 L410 1210 Z" fill="#d8e84a" /><path d="M800 1000 L1010 980 L995 1100 L850 1190 L780 1230 Z" fill="#f08a30" /><path d="M855 1005 L935 995 L925 1120 L845 1175 Z" fill="#d8e84a" /></g><g filter="url(#bl2)"><path d="M364 404 L369 494 L384 470 Q500 334 654 344 Q804 379 944 454 L952 420 Q944 314 879 204 Q780 140 654 154 Q480 170 400 280 Z" fill="#f2f3f4"/><path d="M380 470 Q500 340 654 350 Q804 385 944 460" stroke="#c6ccd2" stroke-width="16" fill="none"/><path d="M840 200 Q944 314 952 420 L944 454 Q900 420 860 400 Z" fill="#dde2e7"/><rect x="419" y="499" width="425" height="130" rx="30" fill="#ffffff" opacity="0.28" stroke="#e6e8ea" stroke-width="10"/></g><rect x="469" y="229" width="205" height="45" fill="#1f2b3b" opacity="0.8"/><rect x="839" y="299" width="110" height="105" fill="#1e2226" rx="20"/><rect x="925" y="325" width="25" height="60" fill="#c02828" /><path d="M440 800 Q600 930 830 860" stroke="#202020" stroke-width="20" fill="none" stroke-linecap="round" /></g></g>
</svg>
<div style="position:absolute;left:725px;top:752px;width:331px;height:125px;background:#fff;border-radius:14px;box-shadow:2px 5px 7px rgba(0,0,0,0.22)"></div><div class="t" style="left:766.8px;top:780.14px;font-size:27.85px;line-height:35px;color:#2340c0;">Product and Material</div><div class="t" style="left:766.8px;top:820.32px;font-size:27.06px;line-height:34px;color:#2340c0;">Reference DOC.pdf</div>
<svg style="position:absolute;left:445px;top:676px;overflow:visible" width="314" height="280" viewBox="0 0 314 280">
<defs><clipPath id="cp3"><circle cx="131" cy="135" r="105"/></clipPath>
<filter id="sh3" x="-20%" y="-20%" width="140%" height="150%"><feGaussianBlur in="SourceAlpha" stdDeviation="5"/><feOffset dx="1" dy="7"/><feComponentTransfer><feFuncA type="linear" slope="0.33"/></feComponentTransfer><feMerge><feMergeNode/><feMergeNode in="SourceGraphic"/></feMerge></filter>
<filter id="bl3" x="-5%" y="-5%" width="110%" height="110%"><feGaussianBlur stdDeviation="7"/></filter></defs>
<path d="M215.75 51.05 L299.5 136.60000000000002 L214.15 220.55 A120 120 0 1 1 215.75 51.05 Z" fill="#88898c" filter="url(#sh3)"/>
<g clip-path="url(#cp3)"><g transform="translate(11,15) scale(0.185042)"><rect x="0" y="0" width="1297" height="1297" fill="#b39878" /><g filter="url(#bl3)"><rect x="60" y="280" width="75" height="820" fill="#d2bea2" /><rect x="135" y="280" width="80" height="820" fill="#d4903e" /><rect x="212" y="280" width="10" height="820" fill="#6a5440" /><rect x="222" y="200" width="198" height="950" fill="#b8a48c" /><rect x="300" y="60" width="700" height="200" fill="#c6ae8e" /><rect x="720" y="250" width="345" height="850" fill="#b89c7a" /><rect x="1065" y="270" width="30" height="830" fill="#1e1c1a" /><rect x="1095" y="300" width="135" height="800" fill="#b8884e" /><rect x="1060" y="400" width="40" height="40" fill="#f0f0ee" /><rect x="150" y="1000" width="250" height="200" fill="#cbc2b2" /><rect x="222" y="380" width="198" height="8" fill="#9c8a74" /><rect x="720" y="380" width="345" height="8" fill="#a08468" /><rect x="222" y="520" width="198" height="8" fill="#9c8a74" /><rect x="720" y="520" width="345" height="8" fill="#a08468" /><rect x="222" y="660" width="198" height="8" fill="#9c8a74" /><rect x="720" y="660" width="345" height="8" fill="#a08468" /><rect x="222" y="800" width="198" height="8" fill="#9c8a74" /><rect x="720" y="800" width="345" height="8" fill="#a08468" /><rect x="222" y="940" width="198" height="8" fill="#9c8a74" /><rect x="720" y="940" width="345" height="8" fill="#a08468" /></g><g filter="url(#bl3)"><path d="M350 620 L420 540 L880 540 L985 700 L995 1000 L880 1200 L500 1220 L380 1000 L330 800 Z" fill="#c9a26c" /><path d="M410 540 L880 540 L920 700 L880 900 L760 1000 L620 1020 L500 960 L420 800 L400 650 Z" fill="#e8bfa0" /><ellipse cx="500" cy="680" rx="40" ry="14" fill="#6a5a50" /><ellipse cx="680" cy="650" rx="40" ry="14" fill="#6a5a50" /><path d="M560 700 L640 700 L650 800 L580 800 Z" fill="#d8a888" /><path d="M530 860 Q610 880 690 855" stroke="#b87868" stroke-width="16" fill="none" stroke-linecap="round" /><path d="M400 1130 L455 1090 L525 1230 L400 1230 Z" fill="#dcea5a" /><path d="M900 1010 L1090 1000 L1060 1150 L870 1220 L820 1150 Z" fill="#dcea5a" /><path d="M520 1120 L820 1120 L800 1230 L540 1230 Z" fill="#1a2232" /></g><g filter="url(#bl3)"><path d="M315 480 L340 380 L420 240 L560 170 L700 165 L860 230 L940 330 L960 450 L975 530 L950 565 L900 520 L640 445 L430 475 L365 560 L335 640 Z" fill="#ece6da" /><path d="M620 190 L700 165 L860 230 L940 330 L960 450 L975 530 L950 565 L900 520 L780 470 L700 320 Z" fill="#d6c8b0" /><path d="M375 520 Q640 380 905 530 L890 580 Q640 450 400 590 Z" fill="#2c2826"/></g><path d="M435 300 L500 285 L505 350 L465 370 L432 345 Z" fill="#2aa0c0" /><rect x="515" y="280" width="165" height="50" fill="#3a86a8" opacity="0.55"/></g></g>
</svg>
<div style="position:absolute;left:1609px;top:790px;width:366px;height:80px;background:#fff;border-radius:14px;box-shadow:2px 5px 7px rgba(0,0,0,0.22)"></div><div class="t" style="left:1633px;top:814.40px;font-size:25.96px;line-height:32px;color:#2c5ee0;">Attachments Requested (3)</div>
<svg style="position:absolute;left:1314px;top:697px;overflow:visible" width="315" height="280" viewBox="0 0 315 280">
<defs><clipPath id="cp4"><circle cx="132" cy="133" r="105"/></clipPath>
<filter id="sh4" x="-20%" y="-20%" width="140%" height="150%"><feGaussianBlur in="SourceAlpha" stdDeviation="5"/><feOffset dx="1" dy="7"/><feComponentTransfer><feFuncA type="linear" slope="0.33"/></feComponentTransfer><feMerge><feMergeNode/><feMergeNode in="SourceGraphic"/></feMerge></filter>
<filter id="bl4" x="-5%" y="-5%" width="110%" height="110%"><feGaussianBlur stdDeviation="7"/></filter></defs>
<path d="M214.91 50.20 L300.5999999999999 136 L213.91 220.79 A120 120 0 1 1 214.91 50.20 Z" fill="#f7961e" filter="url(#sh4)"/>
<g clip-path="url(#cp4)"><g transform="translate(12,13) scale(0.185042)"><rect x="0" y="0" width="1297" height="1297" fill="#d8dce0" /><g filter="url(#bl4)"><ellipse cx="300" cy="300" rx="300" ry="150" fill="#e6e9ec" /><ellipse cx="1000" cy="600" rx="250" ry="200" fill="#e4e7ea" /><path d="M90 560 L200 500 L330 560 L360 900 L90 900 Z" fill="#c2c5c7" /><path d="M210 900 L200 620 M200 700 L140 600 M205 650 L280 560" stroke="#8c8e8e" stroke-width="14" fill="none" stroke-linecap="round" /><rect x="150" y="905" width="1010" height="95" fill="#6e5040" /></g><g filter="url(#bl4)"><ellipse cx="440" cy="650" rx="35" ry="90" fill="#c29680" /><ellipse cx="900" cy="640" rx="35" ry="85" fill="#c29680" /><path d="M420 520 L880 520 L920 600 L900 750 L860 880 L760 960 L640 990 L520 950 L450 850 L420 700 Z" fill="#cba189" /><ellipse cx="550" cy="610" rx="45" ry="15" fill="#3a2e28" /><ellipse cx="740" cy="610" rx="45" ry="15" fill="#3a2e28" /><path d="M450 720 L470 860 L560 960 L640 995 L760 960 L860 860 L885 730 L800 800 L640 825 L520 790 Z" fill="#7a695c" /><path d="M580 790 L740 790 L720 825 L600 825 Z" fill="#eeeeee" /><path d="M480 980 L560 1040 L640 1120 L720 1060 L860 900 L880 985 L800 1100 L640 1165 L500 1120 Z" fill="#c4d0d0" /><path d="M480 1120 L800 1100 L760 1240 L520 1240 Z" fill="#3a5a44" /><path d="M240 1000 L460 860 L500 1000 L480 1240 L300 1220 Z" fill="#2e3a2e" /><path d="M210 990 L460 820 L470 860 L240 1010 L300 1240 L210 1240 Z" fill="#d8f064" /><path d="M880 760 L945 780 L965 1000 L1090 1030 L1090 1240 L600 1240 L700 1120 L870 960 Z" fill="#d8f064" /></g><g filter="url(#bl4)"><path d="M370 470 L392 400 L412 240 L520 140 L660 110 L800 140 L900 240 L950 380 L980 470 L985 530 L930 590 L880 525 L640 500 L430 520 L380 535 Z" fill="#212327" /><path d="M370 460 L640 440 L980 470 L985 535 L640 500 L375 530 Z" fill="#2c2e33" /></g><ellipse cx="625" cy="360" rx="55" ry="60" fill="#e9ebee" /></g></g>
</svg>
<div style="position:absolute;left:1068px;top:1034px;width:315px;height:104.5px;background:#fff;border-radius:14px;box-shadow:2px 5px 7px rgba(0,0,0,0.22)"></div>
<div style="position:absolute;left:1090.7px;top:1053px;width:270px;height:66px;border:1.8px solid #9ea3a7;border-radius:7px;box-sizing:border-box;background:#fff"></div>
<div class="t" style="left:1103px;top:1069.56px;font-size:25.5px;line-height:32px;color:#56595d;">mm</div>
<div class="t" style="left:1149px;top:1069.56px;font-size:25.5px;line-height:32px;color:#56595d;">/</div>
<div class="t" style="left:1173px;top:1069.56px;font-size:25.5px;line-height:32px;color:#56595d;">dd</div>
<div class="t" style="left:1215px;top:1069.56px;font-size:25.5px;line-height:32px;color:#56595d;">/</div>
<div class="t" style="left:1235px;top:1069.56px;font-size:25.5px;line-height:32px;color:#56595d;">yyyy</div>
<svg style="position:absolute;left:1311px;top:1068px" width="37" height="37" viewBox="0 0 28 28"><rect x="0" y="3" width="28" height="25" fill="#4b5157"/><rect x="5" y="0" width="4" height="6" fill="#4b5157"/><rect x="19" y="0" width="4" height="6" fill="#4b5157"/><rect x="2.5" y="10" width="23" height="15.5" fill="#fff"/><g fill="#4b5157"><rect x="5" y="13" width="4" height="4"/><rect x="12" y="13" width="4" height="4"/><rect x="19" y="13" width="4" height="4"/><rect x="5" y="19" width="4" height="4"/><rect x="12" y="19" width="4" height="4"/><rect x="19" y="19" width="4" height="4"/></g></svg>
<svg style="position:absolute;left:780px;top:951px;overflow:visible" width="314" height="280" viewBox="0 0 314 280">
<defs><clipPath id="cp5"><circle cx="129" cy="133.5" r="105"/></clipPath>
<filter id="sh5" x="-20%" y="-20%" width="140%" height="150%"><feGaussianBlur in="SourceAlpha" stdDeviation="5"/><feOffset dx="1" dy="7"/><feComponentTransfer><feFuncA type="linear" slope="0.33"/></feComponentTransfer><feMerge><feMergeNode/><feMergeNode in="SourceGraphic"/></feMerge></filter>
<filter id="bl5" x="-5%" y="-5%" width="110%" height="110%"><feGaussianBlur stdDeviation="7"/></filter></defs>
<path d="M215.86 50.65 L299.70000000000005 135.5 L215.36 219.85 A120 120 0 1 1 215.86 50.65 Z" fill="#055f61" filter="url(#sh5)"/>
<g clip-path="url(#cp5)"><g transform="translate(9,14) scale(0.185042)"><rect x="0" y="0" width="1297" height="1297" fill="#e3eef7" /><g filter="url(#bl5)"><rect x="0" y="450" width="1297" height="350" fill="#eef4f8" /><path d="M80 600 L430 640 L440 1050 L80 1050 Z" fill="#78bcb8" /><ellipse cx="250" cy="820" rx="140" ry="90" fill="#3a9a84" /><ellipse cx="180" cy="700" rx="90" ry="50" fill="#5ab0c8" /><ellipse cx="300" cy="760" rx="60" ry="40" fill="#d8ecec" /><path d="M820 760 L1220 800 L1220 1200 L820 1200 Z" fill="#56aa70" /><ellipse cx="1050" cy="900" rx="130" ry="150" fill="#4aa8b8" /><ellipse cx="920" cy="1000" rx="90" ry="110" fill="#7cc060" /></g><g filter="url(#bl5)"><ellipse cx="410" cy="690" rx="55" ry="100" fill="#4a3028" /><ellipse cx="405" cy="665" rx="30" ry="45" fill="#d04a38" /><path d="M400 520 L640 440 L880 520 L900 700 L860 880 L760 1000 L640 1050 L520 980 L450 860 L390 700 Z" fill="#3c2a22" /><ellipse cx="760" cy="700" rx="90" ry="120" fill="#4e3830" /><ellipse cx="600" cy="565" rx="55" ry="16" fill="#160e0a" /><ellipse cx="830" cy="570" rx="45" ry="15" fill="#160e0a" /><path d="M620 730 L860 745 L830 1000 L700 1085 L620 1010 Z" fill="#1c130f" /><ellipse cx="740" cy="790" rx="90" ry="35" fill="#3e2c26" /><path d="M220 1030 L440 880 L520 980 L640 1060 L760 1050 L820 980 L870 1150 L720 1240 L240 1240 Z" fill="#151515" /><path d="M230 1040 L295 1040 L490 1185 L490 1240 L340 1240 Z" fill="#d4e64c" /><path d="M810 1100 L860 1130 L875 1185 L825 1185 Z" fill="#d4e64c" /></g><g filter="url(#bl5)"><path d="M330 450 L370 330 L440 200 L580 100 L720 100 L840 180 L900 300 L940 420 L962 450 L945 500 L880 525 L860 425 L640 372 L430 425 L372 505 L352 590 L328 540 Z" fill="#f3f3f1" /><path d="M330 450 L640 380 L962 450 L945 505 L640 440 L340 540 Z" fill="#dcdcd2" /><path d="M400 432 L640 372 L862 425 L882 505 L640 442 L420 505 Z" fill="#4c4842" /></g><path d="M635 280 Q680 180 720 190 Q760 200 800 290 M690 270 Q720 220 750 280" stroke="#1a6c60" stroke-width="22" fill="none" stroke-linecap="round" /></g></g>
</svg>
</body></html>
